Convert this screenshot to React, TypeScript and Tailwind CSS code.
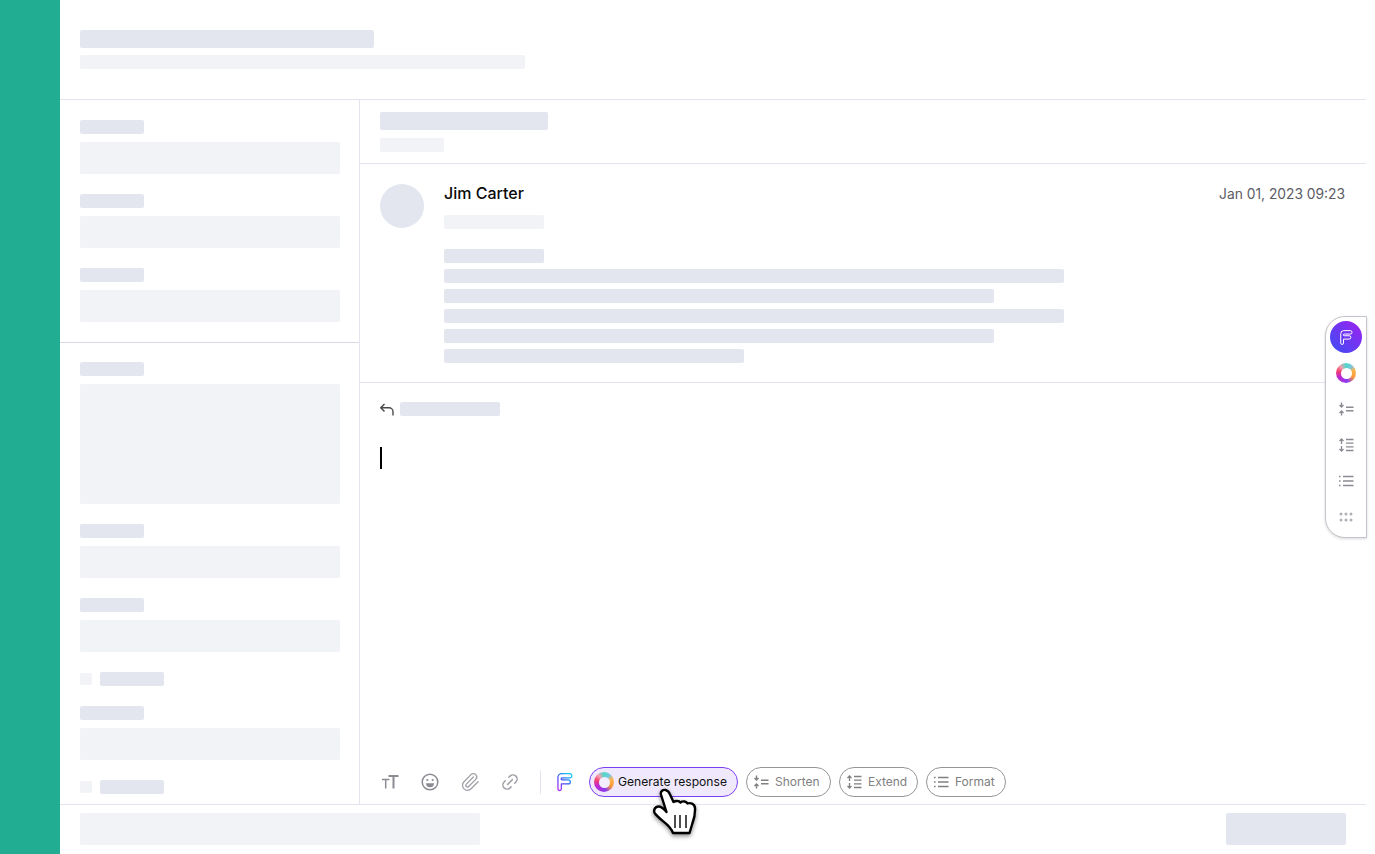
import { Paperclip, Link2 } from "lucide-react";

function Bar({ className }: { className: string }) {
  return <div className={`rounded-[2px] bg-[#e3e6ef] ${className}`} />;
}

function Field({ className }: { className: string }) {
  return <div className={`rounded-[2px] bg-[#f2f3f7] ${className}`} />;
}

function Ring({ inner }: { inner: "tint" | "white" }) {
  return (
    <div className="flex h-5 w-5 items-center justify-center rounded-full bg-[conic-gradient(#4fd8c8_0deg,#7cc8e0_40deg,#fdb44c_70deg,#fb9a3c_120deg,#8a3cf0_170deg,#c026d3_240deg,#f4436c_285deg,#f4a0b0_320deg,#4fd8c8_360deg)]">
      <div className={`h-[11px] w-[11px] rounded-full ${inner === "tint" ? "bg-[#f3eefe]" : "bg-white"}`} />
    </div>
  );
}

function FLogo({ stroke, id, width = 16, height = 20 }: { stroke?: string; id: string; width?: number; height?: number }) {
  return (
    <svg width={width} height={height} viewBox="0 0 17 20" fill="none">
      <defs>
        <linearGradient id={id} x1="1" y1="19" x2="16" y2="1" gradientUnits="userSpaceOnUse">
          <stop offset="0" stopColor="#b81ff0" />
          <stop offset="0.5" stopColor="#3b4ff5" />
          <stop offset="0.85" stopColor="#18c4f5" />
        </linearGradient>
      </defs>
      <path
        d="M5 1H13.500a2.250 2.250 0 0 1 0 4.500H5.500a1.100 1.100 0 0 0 0 2.200H12a2.200 2.200 0 0 1 0 4.400H4.600V17.300a1.800 1.800 0 0 1-3.600 0V5a4 4 0 0 1 4-4Z"
        stroke={stroke ?? `url(#${id})`}
        strokeWidth="1.300"
        strokeLinejoin="round"
      />
    </svg>
  );
}

function ShortenIcon() {
  return (
    <svg width="16" height="14" viewBox="0 0 16 14" fill="none" stroke="currentColor" strokeWidth="1.400">
      <path d="M3.500 0.500v4M1.500 3l2 2 2-2M3.500 13.500v-4M1.500 11l2-2 2 2" />
      <path d="M8 5.200h7.500M8 8.800h7.500" />
    </svg>
  );
}

function ExtendIcon() {
  return (
    <svg width="16" height="14" viewBox="0 0 16 14" fill="none" stroke="currentColor" strokeWidth="1.300">
      <path d="M3.500 6V1M1.500 3l2-2 2 2M3.500 8v5M1.500 11l2 2 2-2" />
      <path d="M8 1.500h7.500M8 5.200h7.500M8 8.800h7.500M8 12.500h7.500" />
    </svg>
  );
}

function FormatIcon() {
  return (
    <svg width="16" height="12" viewBox="0 0 16 12" fill="none" stroke="currentColor" strokeWidth="1.300">
      <path d="M1 1.500h1.600M1 6h1.600M1 10.500h1.600M5 1.500h10.500M5 6h10.500M5 10.500h10.500" />
    </svg>
  );
}

function Chip({ icon, label, className }: { icon: React.ReactNode; label: string; className?: string }) {
  return (
    <div className={`flex h-[30px] items-center gap-[6px] rounded-full border border-[#969696] pl-[6px] text-[12px] text-[#808080] ${className ?? ""}`}>
      {icon}
      <span>{label}</span>
    </div>
  );
}

function HandCursor() {
  return (
    <svg
      width="44"
      height="50"
      viewBox="0 0 44 50"
      className="absolute left-[653px] top-[788px] drop-shadow-[0_2px_2px_rgba(0,0,0,0.45)]"
    >
      <path
        d="M7.800 6C7.500 3 10 1.500 12.500 2C14.500 2.500 16 4 16.800 6L20.500 14C22.500 12.500 26 12.500 27.500 14.500C30 12.500 33.500 13.500 34.500 15.500C37 14.500 41.500 15.500 42 20C42.300 26 41 31 39.500 35L36.500 45H20C19 42 17 40 15 37.500C10 33 4.500 29 2 25.500C0 22.500 2 18.500 5.500 18.500C8.500 18.500 11 21 13.500 24Z"
        fill="#fff"
        stroke="#000"
        strokeWidth="2.400"
        strokeLinejoin="round"
      />
      <path d="M22 27v13M27 27v13M33 27v13" stroke="#222" strokeWidth="1.600" />
    </svg>
  );
}

export default function App() {
  return (
    <div className="relative flex h-[854px] w-[1375px] overflow-hidden bg-white font-['Inter',sans-serif]">
      <div className="w-[60px] shrink-0 bg-[#20ad91]" />

      <div className="flex h-full w-[1306px] flex-col">
        <header className="h-[100px] shrink-0 border-b border-[#e4e4ee] pl-5 pt-[30px]">
          <Bar className="h-[18px] w-[294px]" />
          <Field className="mt-[7px] h-[14px] w-[445px]" />
        </header>

        <div className="flex min-h-0 flex-1">
          <aside className="w-[300px] shrink-0 overflow-hidden border-r border-[#e4e4ee]">
            <div className="flex h-[243px] flex-col gap-5 border-b border-[#d9d9e6] px-5 pt-5">
              {[0, 1, 2].map((i) => (
                <div key={i} className="flex flex-col gap-2">
                  <Bar className="h-[14px] w-16" />
                  <Field className="h-8 w-[260px]" />
                </div>
              ))}
            </div>
            <div className="flex flex-col gap-5 px-5 pt-[19px]">
              <div className="flex flex-col gap-2">
                <Bar className="h-[14px] w-16" />
                <Field className="h-[120px] w-[260px]" />
              </div>
              <div className="flex flex-col gap-2">
                <Bar className="h-[14px] w-16" />
                <Field className="h-8 w-[260px]" />
              </div>
              <div className="flex flex-col gap-2">
                <Bar className="h-[14px] w-16" />
                <Field className="h-8 w-[260px]" />
              </div>
              <div className="flex items-center gap-2">
                <Field className="h-3 w-3" />
                <Bar className="h-[14px] w-16" />
              </div>
              <div className="flex flex-col gap-2">
                <Bar className="h-[14px] w-16" />
                <Field className="h-8 w-[260px]" />
              </div>
              <div className="flex items-center gap-2">
                <Field className="h-3 w-3" />
                <Bar className="h-[14px] w-16" />
              </div>
            </div>
          </aside>

          <main className="flex min-w-0 flex-1 flex-col">
            <div className="h-16 shrink-0 border-b border-[#e4e4ee] pl-5 pt-3">
              <Bar className="h-[18px] w-[168px]" />
              <Field className="mt-2 h-[14px] w-16" />
            </div>

            <div className="flex h-[219px] shrink-0 gap-5 border-b border-[#e4e4ee] px-5 pt-5">
              <div className="h-11 w-11 shrink-0 rounded-full bg-[#e3e6ef]" />
              <div className="flex-1">
                <div className="flex h-5 items-start justify-between">
                  <span className="text-base font-medium leading-[18px] text-[#0a0a0a]">Jim Carter</span>
                  <span className="pr-px text-[13.8px] leading-5 text-[#5c5c66]">Jan 01, 2023 09:23</span>
                </div>
                <Field className="mt-[11px] h-[14px] w-[100px]" />
                <div className="mt-5 flex flex-col gap-[6px]">
                  <Bar className="h-[14px] w-[100px]" />
                  <Bar className="h-[14px] w-[620px]" />
                  <Bar className="h-[14px] w-[550px]" />
                  <Bar className="h-[14px] w-[620px]" />
                  <Bar className="h-[14px] w-[550px]" />
                  <Bar className="h-[14px] w-[300px]" />
                </div>
              </div>
            </div>

            <div className="flex min-h-0 flex-1 flex-col px-5">
              <div className="mt-[19px] flex h-[14px] items-center gap-[6px]">
                <svg width="14" height="13" viewBox="0 0 14 13" fill="none" stroke="#4a4a4a" strokeWidth="1.400">
                  <path d="M4.500 1 .8 4.800l3.700 3.800M.8 4.800h8.200a4 4 0 0 1 4 4V12.500" />
                </svg>
                <Bar className="h-[14px] w-[100px]" />
              </div>
              <div className="mt-[31px] h-[22px] w-[2px] bg-black" />

              <div className="mb-[7px] mt-auto flex h-[30px] items-center">
                <div className="flex w-5 justify-center text-[#8b8b93]">
                  <svg width="18" height="14" viewBox="0 0 18 14" fill="none" stroke="currentColor">
                    <path d="M1 4.500h7.500M4.700 4.500v9" strokeWidth="1.500" />
                    <path d="M7.500 1h10M12.500 1v12.500" strokeWidth="2" />
                  </svg>
                </div>
                <div className="ml-5 flex w-5 justify-center text-[#8b8b93]">
                  <svg width="18" height="18" viewBox="0 0 18 18" fill="none" stroke="currentColor" strokeWidth="1.500">
                    <circle cx="9" cy="9" r="7.800" />
                    <circle cx="6.300" cy="7" r="1.100" fill="currentColor" stroke="none" />
                    <circle cx="11.700" cy="7" r="1.100" fill="currentColor" stroke="none" />
                    <path d="M5 10.300h8a4 4 0 0 1-8 0Z" fill="currentColor" stroke="none" />
                  </svg>
                </div>
                <div className="ml-5 flex w-5 justify-center text-[#a0a0a8]">
                  <Paperclip size={20} strokeWidth={1.600} />
                </div>
                <div className="ml-5 flex w-5 justify-center text-[#a0a0a8]">
                  <Link2 size={20} strokeWidth={1.800} className="-rotate-45" />
                </div>
                <div className="ml-5 h-6 w-px bg-[#e4e4ee]" />
                <div className="ml-4 flex w-4 justify-center">
                  <FLogo id="f-toolbar" />
                </div>
                <div className="ml-4 flex h-[30px] items-center gap-1 rounded-full border border-[#7b3ff2] bg-[#f0e9fd] pl-[4px] pr-[10px] text-[12.100px] text-[#111]">
                  <Ring inner="tint" />
                  <span>Generate response</span>
                </div>
                <div className="ml-2 flex gap-2">
                  <Chip icon={<ShortenIcon />} label="Shorten" className="w-[85px]" />
                  <Chip icon={<ExtendIcon />} label="Extend" className="w-[79px]" />
                  <Chip icon={<FormatIcon />} label="Format" className="w-[80px]" />
                </div>
              </div>
            </div>
          </main>
        </div>

        <footer className="flex h-[50px] shrink-0 items-start justify-between border-t border-[#e4e4ee] px-5 pt-2">
          <Field className="h-8 w-[400px]" />
          <Bar className="h-8 w-[120px]" />
        </footer>
      </div>

      {/* floating toolbar */}
      <div className="absolute left-[1325px] top-[316px] flex h-[222px] w-[42px] flex-col items-center rounded-l-[20px] border border-[#c4c4cc] bg-white pt-1 shadow-[0_1px_3px_rgba(0,0,0,0.15)]">
        <div className="flex h-8 w-8 items-center justify-center rounded-full bg-[linear-gradient(45deg,#3b4ff5,#a020f0)]">
          <FLogo id="f-float" stroke="#fff" width={13} height={17} />
        </div>
        <div className="mt-1 flex h-8 items-center">
          <Ring inner="white" />
        </div>
        <div className="mt-1 flex h-8 items-center text-[#8b8b93]">
          <ShortenIcon />
        </div>
        <div className="mt-1 flex h-8 items-center text-[#8b8b93]">
          <ExtendIcon />
        </div>
        <div className="mt-1 flex h-8 items-center text-[#8b8b93]">
          <FormatIcon />
        </div>
        <div className="mt-1 flex h-8 items-center text-[#b0b0b8]">
          <svg width="14" height="10" viewBox="0 0 14 10" fill="currentColor">
            <circle cx="2" cy="2" r="1.500" />
            <circle cx="7" cy="2" r="1.500" />
            <circle cx="12" cy="2" r="1.500" />
            <circle cx="2" cy="8" r="1.500" />
            <circle cx="7" cy="8" r="1.500" />
            <circle cx="12" cy="8" r="1.500" />
          </svg>
        </div>
      </div>

      <HandCursor />
    </div>
  );
}
